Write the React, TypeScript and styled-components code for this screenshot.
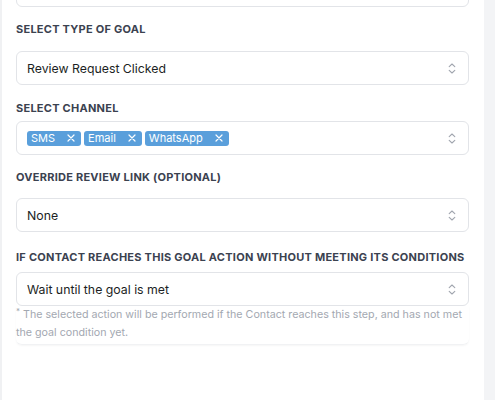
import React from "react";
import styled, { createGlobalStyle } from "styled-components";

const Global = createGlobalStyle`
  html, body { margin: 0; padding: 0; background: #f3f4f6; }
  body { font-family: Inter, "Noto Sans", sans-serif; -webkit-font-smoothing: antialiased; }
`;

const Page = styled.div`
  display: flex;
  width: 495px;
  height: 400px;
  overflow: hidden;
`;

const Panel = styled.div`
  width: 484px;
  height: 400px;
  background: #ffffff;
  border-left: 2px solid #f0f1f3;
  box-sizing: border-box;
  padding: 0 15px 0 14px;
  display: flex;
  flex-direction: column;
`;

const TopBox = styled.div`
  margin-top: -27px;
  height: 34px;
  box-sizing: border-box;
  border: 1px solid #e2e4e8;
  border-radius: 6px;
  background: #fff;
`;

const Field = styled.div<{ $mt: number; $gap: number }>`
  display: flex;
  flex-direction: column;
  margin-top: ${(p) => p.$mt}px;
  gap: ${(p) => p.$gap}px;
`;

const Label = styled.div`
  font-size: 11px;
  line-height: 16px;
  font-weight: 700;
  letter-spacing: 0.25px;
  color: #3b4250;
  text-transform: uppercase;
  white-space: nowrap;
`;

const Select = styled.div`
  height: 34px;
  box-sizing: border-box;
  border: 1px solid #e2e4e8;
  border-radius: 6px;
  background: #fff;
  display: flex;
  align-items: center;
  padding: 0 12px 0 10px;
  font-size: 12.3px;
  color: #1c1f24;
`;

const Value = styled.div`
  flex: 1;
  display: flex;
  align-items: center;
  gap: 3px;
`;

const Tag = styled.span`
  display: inline-flex;
  align-items: center;
  height: 15px;
  padding: 0 6px 0 4px;
  gap: 12px;
  border-radius: 3px;
  background: #5a9fdb;
  color: #fff;
  font-size: 11px;
  line-height: 15px;
`;

const Hint = styled.div`
  border-radius: 0 0 6px 6px;
  box-shadow: 0 1px 2px rgba(0, 0, 0, 0.04);
  border-bottom: 1px solid #f1f2f4;
  padding: 0 0 2px 0;
  font-size: 10.7px;
  line-height: 18px;
  color: #a3a8b1;
`;

const Star = styled.span`
  font-size: 8px;
  line-height: 10px;
  vertical-align: top;
  margin-right: 3px;
`;

const Chevron = () => (
  <svg width="8" height="11" viewBox="0 0 8 11" fill="none">
    <path d="M1.2 3.6 L4 1 L6.8 3.6" stroke="#a0a5ae" strokeWidth="1.1" strokeLinecap="round" strokeLinejoin="round" />
    <path d="M1.2 7.4 L4 10 L6.8 7.4" stroke="#a0a5ae" strokeWidth="1.1" strokeLinecap="round" strokeLinejoin="round" />
  </svg>
);

const Cross = () => (
  <svg width="8" height="8" viewBox="0 0 8 8">
    <path d="M1 1 L7 7 M7 1 L1 7" stroke="#fff" strokeWidth="1.2" strokeLinecap="round" />
  </svg>
);

export default function App() {
  return (
    <>
      <Global />
      <Page>
        <Panel>
          <TopBox />
          <Field $mt={14} $gap={14}>
            <Label>Select Type of Goal</Label>
            <Select>
              <Value>Review Request Clicked</Value>
              <Chevron />
            </Select>
          </Field>
          <Field $mt={15} $gap={5}>
            <Label>Select Channel</Label>
            <Select>
              <Value>
                <Tag>SMS <Cross /></Tag>
                <Tag>Email <Cross /></Tag>
                <Tag>WhatsApp <Cross /></Tag>
              </Value>
              <Chevron />
            </Select>
          </Field>
          <Field $mt={14} $gap={13}>
            <Label>Override Review Link (Optional)</Label>
            <Select>
              <Value>None</Value>
              <Chevron />
            </Select>
          </Field>
          <Field $mt={17} $gap={7}>
            <Label>If contact reaches this goal action without meeting its conditions</Label>
            <Select>
              <Value>Wait until the goal is met</Value>
              <Chevron />
            </Select>
          </Field>
          <Hint>
            <Star>*</Star>The selected action will be performed if the Contact reaches this step, and has not met the goal condition yet.
          </Hint>
        </Panel>
      </Page>
    </>
  );
}
